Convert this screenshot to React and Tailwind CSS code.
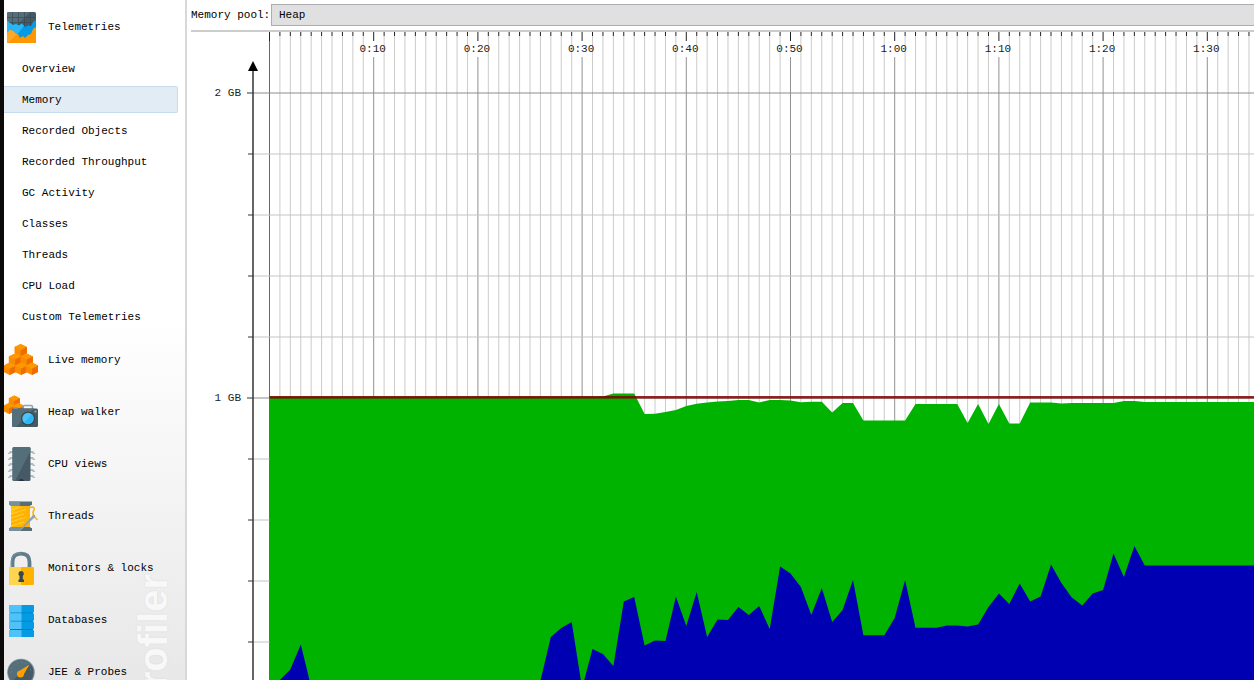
import { useLayoutEffect, useRef, useState } from 'react';

const TELEMETRY_VIEWS = [
  'Overview', 'Memory', 'Recorded Objects', 'Recorded Throughput', 'GC Activity',
  'Classes', 'Threads', 'CPU Load', 'Custom Telemetries',
];

function Icon({ children }) {
  return (
    <svg width="34" height="34" viewBox="0 0 34 34" className="shrink-0" aria-hidden="true">
      {children}
    </svg>
  );
}

function Cube({ x, y, r = 6.2 }) {
  const h = r / 2;
  return (
    <g transform={`translate(${x} ${y})`}>
      <path d={`M0 ${-r} L${r} ${-h} L${r} ${h} L0 ${r} L${-r} ${h} L${-r} ${-h} Z`} fill="#fb8c00" />
      <path d={`M0 ${-r} L${r} ${-h} L0 0 L${-r} ${-h} Z`} fill="#ff9800" />
      <path d={`M${r} ${-h} L0 0 L0 ${r} L${r} ${h} Z`} fill="#ef6c00" />
    </g>
  );
}

function TelemetryIcon() {
  return (
    <Icon>
      <rect x="3" y="2" width="29" height="31" rx="1.5" fill="#455a64" />
      <path d="M3 3.5Q3 2 4.500 2H26L14 14L3 12Z" fill="#546e7a" />
      <path d="M8.500 2V16M14.500 2V18M20.500 2V18M26.500 2V16M3 7.500H32M3 12.500H32" stroke="#37474f" strokeWidth="0.6" />
      <path d="M3 10.500L6 13L9 15L12 14L15 15.500L18 13.500L21 17L24 15.500L27 16L29 12L32 10V28H3Z" fill="#039be5" />
      <path d="M3 10.500L6 13L9 15L12 14L15 15.500L18 13.500L20 16L12 26H3Z" fill="#29b6f6" />
      <path d="M3 23L6 20L9 21L12 24L14 24L16 28L19 26L21 28L24 25L27 24L29 19L32 17V31.500Q32 33 30.500 33H4.500Q3 33 3 31.500Z" fill="#ff9800" />
      <path d="M3 23L6 20L9 21L12 24L13 24L4 33Q3 33 3 31.500Z" fill="#ffa726" />
    </Icon>
  );
}

function LiveMemoryIcon() {
  return (
    <Icon>
      <Cube x={16.7} y={7.2} />
      <Cube x={11} y={16.6} />
      <Cube x={22.7} y={16.6} />
      <Cube x={5.6} y={25.8} />
      <Cube x={17} y={25.8} />
      <Cube x={28} y={25.8} />
    </Icon>
  );
}

function HeapWalkerIcon() {
  return (
    <Icon>
      <Cube x={10.3} y={6} r={5.5} />
      <Cube x={5} y={13.500} r={5.5} />
      <Cube x={14.5} y={13.500} r={5.5} />
      <path d="M19 14V12Q19 10.500 20.500 10.500H27Q28.500 10.500 28.500 12V14" fill="none" stroke="#90a4ae" strokeWidth="1.6" />
      <rect x="8" y="13.500" width="26" height="18.500" rx="1.5" fill="#455a64" />
      <path d="M9.500 13.500H30L12 32H9.500Q8 32 8 30.500V15Q8 13.500 9.500 13.500Z" fill="#546e7a" />
      <rect x="9.500" y="12.500" width="4" height="1.500" fill="#78909c" />
      <circle cx="24" cy="23.500" r="7" fill="#37474f" />
      <circle cx="24" cy="23.500" r="5.700" fill="#4fc3f7" />
      <path d="M28 19.500A5.700 5.700 0 0 1 20 27.500Z" fill="#29b6f6" />
      <rect x="30.500" y="15.500" width="2" height="2" fill="#90a4ae" />
    </Icon>
  );
}

function CpuIcon() {
  return (
    <Icon>
      {[5, 11, 17, 23, 29].map((y) => (
        <path key={y} d={`M3.500 ${y + 2}L6 ${y - 1}H29L31.500 ${y + 2}H29L28 ${y + 1}H7L6 ${y + 2}Z`} fill="#b0bec5" />
      ))}
      <rect x="8.500" y="0" width="18" height="34" rx="1.5" fill="#455a64" />
      <path d="M10 0H25Q26.500 0 26.500 1.500V4L11 34H10Q8.500 34 8.500 32.500V1.500Q8.500 0 10 0Z" fill="#546e7a" />
      <path d="M14.500 34A2.800 2.600 0 0 1 20 34Z" fill="#263238" />
    </Icon>
  );
}

function ThreadIcon() {
  return (
    <Icon>
      <rect x="7" y="5" width="19" height="24" fill="#ffb300" />
      <path d="M7 5H17L7 17Z" fill="#ffc107" />
      <path d="M7 11L18 8M7 15L22 10.500M7 19L20 15M7 23L22 18M7 27L20 23" stroke="#ffd54f" strokeWidth="0.8" />
      <path d="M26 8.500Q31 7 30 11Q28 14 30 17Q31 19 33.500 21" fill="none" stroke="#ffb300" strokeWidth="1.600" />
      <path d="M5 2.500H28V6H26.500V7H6.500V6H5Z" fill="#546e7a" />
      <path d="M5 2.500H16V7H6.500V6H5Z" fill="#78909c" />
      <path d="M6.500 28H26.500V29H28V32H5V29H6.500Z" fill="#546e7a" />
      <path d="M6.500 28H20L15 32H5V29H6.500Z" fill="#78909c" />
      <path d="M15 32L29 16Q32 15 31 18L16 32Z" fill="#90a4ae" />
    </Icon>
  );
}

function LockIcon() {
  return (
    <Icon>
      <path d="M8.500 18V11Q8.500 2.700 17 2.700Q25.500 2.700 25.500 11V18" fill="none" stroke="#607d8b" strokeWidth="3.800" />
      <path d="M7.500 18V11Q7.500 2 17 2" fill="none" stroke="#78909c" strokeWidth="1" />
      <rect x="5" y="16" width="25" height="18" rx="1" fill="#ffb300" />
      <path d="M6 16H17V34H6Q5 34 5 33V17Q5 16 6 16Z" fill="#ffd54f" />
      <path d="M17 20A2.800 2.800 0 0 1 18.800 25V28.500H20V31H14.500V28.500H15.500V25A2.800 2.800 0 0 1 17 20Z" fill="#37474f" />
    </Icon>
  );
}

function DatabaseIcon() {
  return (
    <Icon>
      <rect x="6" y="3" width="23" height="29" fill="#0277bd" />
      {[2, 10.3, 18.600, 26.900].map((y) => (
        <g key={y}>
          <rect x="5" y={y} width="25" height="7.500" rx="1" fill="#039be5" />
          <path d={`M6 ${y}H17.500V${y + 7.5}H6Q5 ${y + 7.5} 5 ${y + 6.5}V${y + 1}Q5 ${y} 6 ${y}Z`} fill="#4fc3f7" />
        </g>
      ))}
    </Icon>
  );
}

function ProbeIcon() {
  return (
    <Icon>
      <circle cx="17" cy="17.500" r="13.800" fill="#78909c" />
      <circle cx="17" cy="17.500" r="12.600" fill="#455a64" />
      <path d="M8 26.500A12.600 12.600 0 0 1 26 8.500Z" fill="#546e7a" />
      <path d="M7 17.500A10 10 0 0 1 27 17.500" fill="none" stroke="#78909c" strokeWidth="1" strokeDasharray="1 3" />
      <path d="M25.500 9.500L20 19A3.500 3.500 0 1 1 16 15.500Z" fill="#ffa000" />
    </Icon>
  );
}

const SECTIONS = [
  ['Live memory', LiveMemoryIcon],
  ['Heap walker', HeapWalkerIcon],
  ['CPU views', CpuIcon],
  ['Threads', ThreadIcon],
  ['Monitors & locks', LockIcon],
  ['Databases', DatabaseIcon],
  ['JEE & Probes', ProbeIcon],
];

function SectionButton({ label, Glyph }) {
  return (
    <button type="button" className="flex h-[52px] w-full shrink-0 items-center gap-[10px] text-left">
      <Glyph />
      <span>{label}</span>
    </button>
  );
}

function Sidebar() {
  return (
    <nav
      aria-label="Views"
      className="relative flex w-[187px] shrink-0 flex-col overflow-hidden border-l-4 border-r-2 border-l-[#0c0a08] border-r-[#d8d8d8] bg-linear-to-b from-white from-47% to-[#e8e8e8]"
    >
      <div
        aria-hidden="true"
        className="absolute left-[127px] top-[574px] rotate-180 whitespace-nowrap font-['Liberation_Sans',sans-serif] text-[40px] font-bold leading-[44px] text-[#f8f8f8] [text-shadow:0_0_2px_#d8d8d8] [writing-mode:vertical-rl]"
      >
        JProfiler
      </div>
      <div className="relative flex flex-col pt-px">
        <SectionButton label="Telemetries" Glyph={TelemetryIcon} />
        <ul className="pb-[2px]">
          {TELEMETRY_VIEWS.map((name) => (
            <li key={name} className="flex h-[31px] items-center pr-[7px]">
              <a
                href="#"
                aria-current={name === 'Memory' ? 'page' : undefined}
                className={
                  name === 'Memory'
                    ? 'flex h-[27px] w-full items-center rounded-r-xs border border-l-0 border-[#c6dcee] bg-[#e2ecf5] pl-[18px]'
                    : 'flex h-[27px] w-full items-center pl-[18px]'
                }
              >
                {name}
              </a>
            </li>
          ))}
        </ul>
        {SECTIONS.map(([label, Glyph]) => (
          <SectionButton key={label} label={label} Glyph={Glyph} />
        ))}
      </div>
    </nav>
  );
}

const SECOND = 10.42;
const ORIGIN = 82.5;
const STEP = 61;
const TOP_LINE = 61;

// Vertical positions, one per recorded second.
const COMMITTED = [
  ...Array(33).fill(364.5), 361.5, 361.5, 361.5, 382, 381.7, 380, 378, 374, 371.7, 370.5, 369.5, 369, 368, 368,
  370.5, 368, 368, 368.5, 370.3, 369.8, 369.8, 380.5, 371, 371, 388.5, 388.5, 388.5, 388.5, 388.5, 372, 372, 372,
  372, 372, 391, 372, 392, 372, 391.5, 391.5, 370.5, 370.5, 370.5, 371.5, 371, 371, 371, 371, 371, 369, 369, 370,
];
const USED = [
  655, 648, 637.5, 612.5, 655, ...Array(21).fill(658), 649, 605, 596, 590, 656, 617, 622, 634, 569.5, 565, 613.5,
  608.5, 609, 564.5, 594, 560, 605, 587.5, 588, 575, 583, 574, 597, 534.5, 541.5, 555, 583, 556, 590, 578, 548,
  603.3, 603.3, 603.3, 586, 548, 595.7, 595.7, 595.7, 593.5, 593.5, 594.5, 592.5, 575, 561.5, 572, 551.5, 569.5,
  564.5, 532.5, 551, 565.5, 573.5, 561.5, 558, 521.5, 545, 514, 533.5,
];

function areaPoints(values) {
  const line = values.map((y, i) => `${(ORIGIN + i * SECOND).toFixed(1)},${y}`);
  return `${ORIGIN},4000 ${line.join(' ')} 6000,${values[values.length - 1]} 6000,4000`;
}

function timeLabel(s) {
  return `${Math.floor(s / 60)}:${String(s % 60).padStart(2, '0')}`;
}

function MemoryChart() {
  const frame = useRef(null);
  const [size, setSize] = useState({ width: 0, height: 0 });

  useLayoutEffect(() => {
    const measure = () => {
      const box = frame.current.getBoundingClientRect();
      setSize({ width: box.width, height: box.height });
    };
    measure();
    window.addEventListener('resize', measure);
    return () => window.removeEventListener('resize', measure);
  }, []);

  const secondCount = Math.max(0, Math.ceil((size.width - ORIGIN) / SECOND));
  const seconds = Array.from({ length: secondCount }, (_, i) => i);
  const rowCount = Math.max(0, Math.ceil((size.height - TOP_LINE) / STEP));
  const rows = Array.from({ length: rowCount }, (_, i) => i);
  const labels = seconds.filter((s) => s > 0 && s % 10 === 0 && ORIGIN + s * SECOND + 14 < size.width);

  return (
    <div ref={frame} className="min-h-0 flex-1 overflow-hidden">
      <svg width="100%" height="100%" className="block" role="img" aria-label="Heap memory over time">
        {seconds.map((s) => {
          const x = ORIGIN + s * SECOND;
          const major = s > 0 && s % 10 === 0;
          return (
            <g key={s}>
              <line x1={x} x2={x} y1={major ? 25 : 4} y2="100%" stroke={s === 0 ? '#686868' : major ? '#929292' : '#cbcbcb'} />
              <line x1={x} x2={x} y1="0" y2={s % 10 === 0 ? 9 : 4} stroke="#222222" />
            </g>
          );
        })}
        {rows.map((i) => {
          const y = TOP_LINE + i * STEP;
          const major = i % 5 === 0;
          return (
            <g key={i}>
              <line x1="66" x2="100%" y1={y} y2={y} stroke={major ? '#8c8c8c' : '#c4c4c4'} />
              <line x1={major ? 60 : 61} x2="66" y1={y} y2={y} stroke="#333333" />
            </g>
          );
        })}
        <polygon points={areaPoints(COMMITTED)} fill="#00b300" />
        <polygon points={areaPoints(USED)} fill="#0000b3" />
        <rect x={ORIGIN} y="364" width="100%" height="2.6" fill="#800000" fillOpacity="0.85" />
        <line x1="66" x2="66" y1="36" y2="100%" stroke="#333333" strokeWidth="1.5" />
        <path d="M66 29L71 39H61Z" fill="#000000" />
        <g fill="#222222">
          <text x="54" y="64" textAnchor="end">2 GB</text>
          <text x="54" y="369" textAnchor="end">1 GB</text>
          {labels.map((s) => (
            <text key={s} x={ORIGIN + s * SECOND - 1} y="20" textAnchor="middle">{timeLabel(s)}</text>
          ))}
        </g>
      </svg>
    </div>
  );
}

export default function App() {
  return (
    <div className="flex h-screen overflow-hidden bg-white font-['Liberation_Mono',monospace] text-[11px] leading-4 text-black">
      <Sidebar />
      <main className="flex min-w-0 flex-1 flex-col">
        <div className="ml-[4px] flex h-8 shrink-0 items-center border-b-2 border-[#cccccc]">
          <label htmlFor="pool" className="w-[80px] shrink-0 whitespace-nowrap">Memory pool:</label>
          <select
            id="pool"
            className="-mr-px h-[22px] min-w-0 flex-1 appearance-none border border-[#adadb3] bg-[#e0e0e0] px-[7px] outline-none"
          >
            <option>Heap</option>
          </select>
        </div>
        <MemoryChart />
      </main>
    </div>
  );
}
